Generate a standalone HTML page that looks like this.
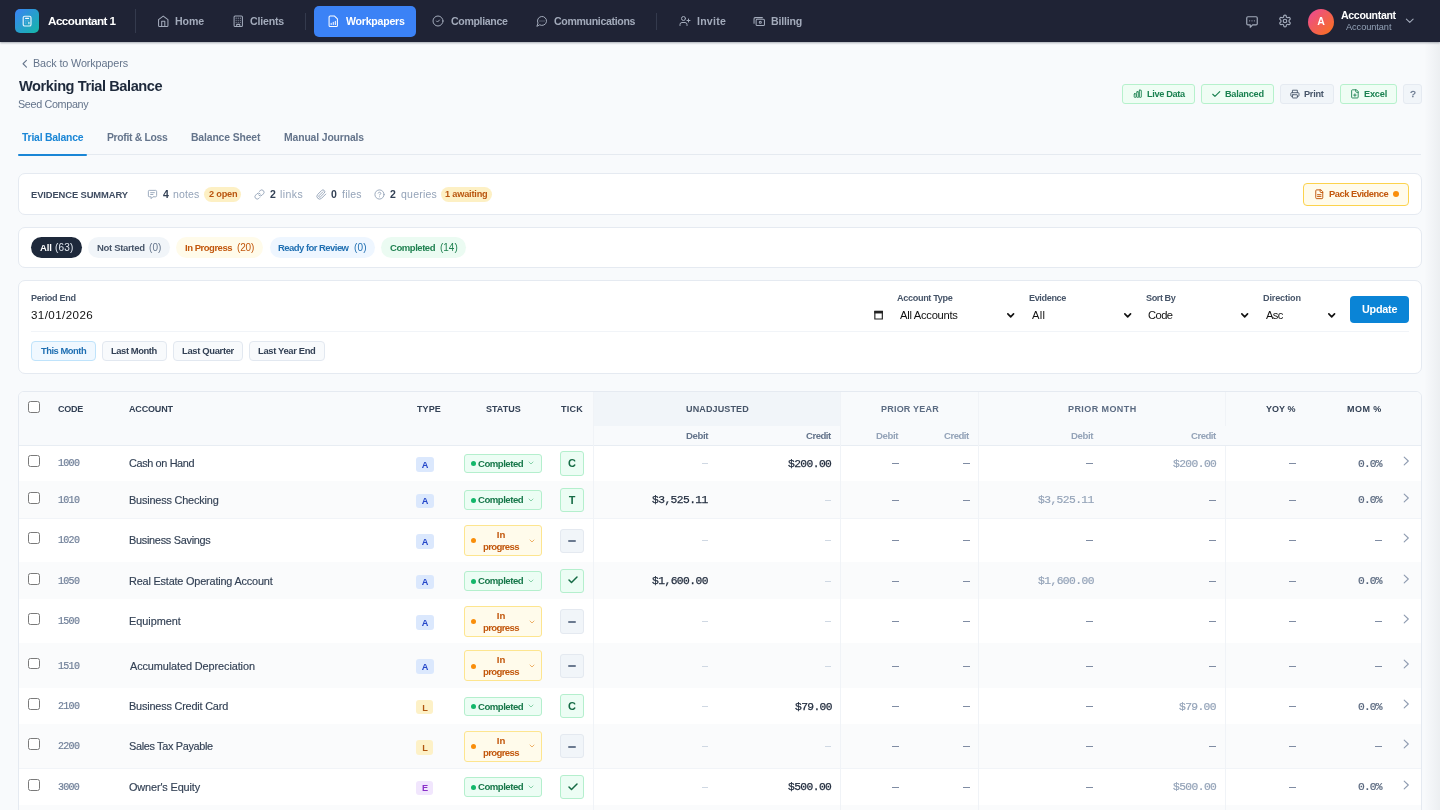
<!DOCTYPE html>
<html><head><meta charset="utf-8"><title>Working Trial Balance</title><style>
*{margin:0;padding:0}
html,body{width:1440px;height:810px;overflow:hidden;background:#f8fafc;font-family:'Liberation Sans',sans-serif}
.b{position:absolute}
.t{position:absolute;white-space:nowrap;will-change:transform}
.i{position:absolute;overflow:visible}
</style></head>
<body>
<div class="b" style="left:0.00px;top:0.00px;width:1440.00px;height:41.50px;background:#1f2335;box-shadow:0 1px 2px rgba(15,23,42,.35)"></div>
<div class="b" style="left:15.00px;top:9.00px;width:24.00px;height:24.00px;background:linear-gradient(135deg,#3b82f6,#14b8a6);border-radius:5px"></div>
<svg class="i" style="left:22px;top:15px;width:10px;height:12px" viewBox="0 0 10 12"><rect x="1.2" y="1.2" width="7.8" height="9.8" rx="1.6" fill="none" stroke="#e6f4fb" stroke-width="1.15"/><path d="M3.6 3.4h3" stroke="#f2fbff" stroke-width="1.1" stroke-linecap="round"/><path d="M3.2 5.9h1.2M5.4 5.9h1.2M3.2 8.1h1.2" stroke="#bfe3f5" stroke-width="0.9" opacity=".6"/><path d="M6.9 7.4v1.4" stroke="#f2fbff" stroke-width="1.1" stroke-linecap="round"/></svg>
<div class="t" id="t0" style="top:15.40px;font:700 11.7px/11.7px 'Liberation Sans',sans-serif;color:#ffffff;letter-spacing:-0.538px;left:48.01px;">Accountant 1</div>
<div class="b" style="left:134.50px;top:9.00px;width:1.00px;height:24.00px;background:#343a4d"></div>
<svg class="i" style="left:156.50px;top:15.20px;width:12.50px;height:12.50px;" viewBox="0 0 24 24" fill="none" stroke="#a3abbb" stroke-width="2" stroke-linecap="round" stroke-linejoin="round"><path d="m3 9 9-7 9 7v11a2 2 0 0 1-2 2H5a2 2 0 0 1-2-2z"/><polyline points="9 22 9 12 15 12 15 22"/></svg>
<div class="t" id="t1" style="top:16.13px;font:700 10.6px/10.6px 'Liberation Sans',sans-serif;color:#a3abbb;letter-spacing:-0.089px;left:174.69px;">Home</div>
<svg class="i" style="left:231.50px;top:15.20px;width:12.50px;height:12.50px;" viewBox="0 0 24 24" fill="none" stroke="#a3abbb" stroke-width="2" stroke-linecap="round" stroke-linejoin="round"><rect x="4" y="2" width="16" height="20" rx="2"/><path d="M9 22v-4h6v4"/><path d="M8 6h.01M16 6h.01M12 6h.01M12 10h.01M12 14h.01M16 10h.01M16 14h.01M8 10h.01M8 14h.01"/></svg>
<div class="t" id="t2" style="top:16.13px;font:700 10.6px/10.6px 'Liberation Sans',sans-serif;color:#a3abbb;letter-spacing:-0.193px;left:249.97px;">Clients</div>
<div class="b" style="left:304.80px;top:12.50px;width:1.00px;height:17.30px;background:#343a4d"></div>
<div class="b" style="left:314.20px;top:6.20px;width:102.00px;height:30.80px;background:#3b82f6;border-radius:5px"></div>
<svg class="i" style="left:327.00px;top:15.20px;width:12.50px;height:12.50px;" viewBox="0 0 24 24" fill="none" stroke="#ffffff" stroke-width="2" stroke-linecap="round" stroke-linejoin="round"><path d="M14.5 2H6a2 2 0 0 0-2 2v16a2 2 0 0 0 2 2h12a2 2 0 0 0 2-2V7.5L14.5 2z"/><path d="M8 18v-2M12 18v-4M16 18v-6"/></svg>
<div class="t" id="t3" style="top:16.13px;font:700 10.6px/10.6px 'Liberation Sans',sans-serif;color:#ffffff;letter-spacing:-0.245px;left:345.79px;">Workpapers</div>
<svg class="i" style="left:432.20px;top:15.40px;width:12.00px;height:12.00px;" viewBox="0 0 24 24" fill="none" stroke="#a3abbb" stroke-width="2" stroke-linecap="round" stroke-linejoin="round"><circle cx="12" cy="12" r="10"/><path d="m9 12 2 2 4-4"/></svg>
<div class="t" id="t4" style="top:16.23px;font:700 10.6px/10.6px 'Liberation Sans',sans-serif;color:#a3abbb;letter-spacing:-0.350px;left:450.57px;">Compliance</div>
<svg class="i" style="left:535.60px;top:15.30px;width:12.00px;height:12.00px;" viewBox="0 0 24 24" fill="none" stroke="#a3abbb" stroke-width="2" stroke-linecap="round" stroke-linejoin="round"><path d="M7.9 20A9 9 0 1 0 4 16.1L2 22Z"/><path d="M8 12h.01M12 12h.01M16 12h.01"/></svg>
<div class="t" id="t5" style="top:16.23px;font:700 10.6px/10.6px 'Liberation Sans',sans-serif;color:#a3abbb;letter-spacing:-0.344px;left:553.67px;">Communications</div>
<div class="b" style="left:656.00px;top:12.50px;width:1.00px;height:17.30px;background:#343a4d"></div>
<svg class="i" style="left:678.50px;top:15.30px;width:12.00px;height:12.00px;" viewBox="0 0 24 24" fill="none" stroke="#a3abbb" stroke-width="2" stroke-linecap="round" stroke-linejoin="round"><path d="M16 21v-2a4 4 0 0 0-4-4H6a4 4 0 0 0-4 4v2"/><circle cx="9" cy="7" r="4"/><path d="M19 8v6M22 11h-6"/></svg>
<div class="t" id="t6" style="top:16.13px;font:700 10.6px/10.6px 'Liberation Sans',sans-serif;color:#a3abbb;letter-spacing:0.230px;left:696.54px;">Invite</div>
<svg class="i" style="left:752.80px;top:15.00px;width:12.50px;height:12.50px;" viewBox="0 0 24 24" fill="none" stroke="#a3abbb" stroke-width="2" stroke-linecap="round" stroke-linejoin="round"><rect x="6" y="8" width="16" height="12" rx="2"/><path d="M2 16V7a2 2 0 0 1 2-2h14"/><circle cx="14" cy="14" r="2"/></svg>
<div class="t" id="t7" style="top:16.13px;font:700 10.6px/10.6px 'Liberation Sans',sans-serif;color:#a3abbb;letter-spacing:-0.193px;left:771.39px;">Billing</div>
<svg class="i" style="left:1244.50px;top:14.50px;width:14.00px;height:14.00px;" viewBox="0 0 24 24" fill="none" stroke="#a3abbb" stroke-width="2" stroke-linecap="round" stroke-linejoin="round"><path d="M21 15a2 2 0 0 1-2 2H13l-4 4v-4H5a2 2 0 0 1-2-2V5a2 2 0 0 1 2-2h14a2 2 0 0 1 2 2z"/><path d="M8 10h.01M12 10h.01M16 10h.01"/></svg>
<svg class="i" style="left:1277.60px;top:14.30px;width:14.00px;height:14.00px;" viewBox="0 0 24 24" fill="none" stroke="#a3abbb" stroke-width="2" stroke-linecap="round" stroke-linejoin="round"><path d="M12.22 2h-.44a2 2 0 0 0-2 2v.18a2 2 0 0 1-1 1.73l-.43.25a2 2 0 0 1-2 0l-.15-.08a2 2 0 0 0-2.73.73l-.22.38a2 2 0 0 0 .73 2.73l.15.1a2 2 0 0 1 1 1.72v.51a2 2 0 0 1-1 1.74l-.15.09a2 2 0 0 0-.73 2.73l.22.38a2 2 0 0 0 2.73.73l.15-.08a2 2 0 0 1 2 0l.43.25a2 2 0 0 1 1 1.73V20a2 2 0 0 0 2 2h.44a2 2 0 0 0 2-2v-.18a2 2 0 0 1 1-1.730l.43-.25a2 2 0 0 1 2 0l.15.08a2 2 0 0 0 2.73-.73l.22-.39a2 2 0 0 0-.73-2.73l-.15-.08a2 2 0 0 1-1-1.74v-.5a2 2 0 0 1 1-1.74l.15-.09a2 2 0 0 0 .73-2.73l-.22-.38a2 2 0 0 0-2.73-.73l-.15.08a2 2 0 0 1-2 0l-.43-.25a2 2 0 0 1-1-1.73V4a2 2 0 0 0-2-2z"/><circle cx="12" cy="12" r="3"/></svg>
<div class="b" style="left:1308.30px;top:8.50px;width:26.00px;height:26.00px;background:linear-gradient(135deg,#ec4899,#f97316);border-radius:50%"></div>
<div class="t" id="t8" style="top:16.21px;font:700 10.5px/10.5px 'Liberation Sans',sans-serif;color:#ffffff;letter-spacing:0.000px;left:1321.30px;transform:translateX(-50%);">A</div>
<div class="t" id="t9" style="top:10.13px;font:700 10.6px/10.6px 'Liberation Sans',sans-serif;color:#ffffff;letter-spacing:-0.352px;left:1341.04px;">Accountant</div>
<div class="t" id="t10" style="top:22.51px;font:400 9.2px/9.2px 'Liberation Sans',sans-serif;color:#94a3b8;letter-spacing:-0.055px;left:1345.98px;">Accountant</div>
<svg class="i" style="left:1402.80px;top:13.60px;width:13.50px;height:13.50px;" viewBox="0 0 24 24" fill="none" stroke="#a3abbb" stroke-width="1.9" stroke-linecap="round" stroke-linejoin="round"><path d="m6 9 6 6 6-6"/></svg>
<svg class="i" style="left:17.60px;top:56.90px;width:13.50px;height:13.50px;" viewBox="0 0 24 24" fill="none" stroke="#64748b" stroke-width="1.9" stroke-linecap="round" stroke-linejoin="round"><path d="m15 18-6-6 6-6"/></svg>
<div class="t" id="t11" style="top:57.76px;font:400 10.8px/10.8px 'Liberation Sans',sans-serif;color:#64748b;letter-spacing:-0.117px;left:32.86px;">Back to Workpapers</div>
<div class="t" id="t12" style="top:78.89px;font:700 14.6px/14.6px 'Liberation Sans',sans-serif;color:#1e293b;letter-spacing:-0.429px;left:18.74px;">Working Trial Balance</div>
<div class="t" id="t13" style="top:98.96px;font:400 10.8px/10.8px 'Liberation Sans',sans-serif;color:#64748b;letter-spacing:-0.348px;left:18.11px;">Seed Company</div>
<div class="b" style="left:1122.20px;top:84.20px;width:72.80px;height:19.60px;background:#effdf4;border:1px solid #b6f1cc;border-radius:3px;box-sizing:border-box"></div>
<svg class="i" style="left:1132.50px;top:89.30px;width:9.50px;height:9.50px;" viewBox="0 0 24 24" fill="none" stroke="#1a8150" stroke-width="2.2" stroke-linecap="round" stroke-linejoin="round"><rect x="3" y="12" width="5" height="9" rx="1"/><rect x="9.5" y="7" width="5" height="14" rx="1"/><rect x="16" y="3" width="5" height="18" rx="1"/></svg>
<div class="t" id="t14" style="top:89.71px;font:700 9.2px/9.2px 'Liberation Sans',sans-serif;color:#1a8150;letter-spacing:-0.338px;left:1146.68px;">Live Data</div>
<div class="b" style="left:1201.30px;top:84.20px;width:72.50px;height:19.60px;background:#effdf4;border:1px solid #b6f1cc;border-radius:3px;box-sizing:border-box"></div>
<svg class="i" style="left:1211.00px;top:88.80px;width:10.50px;height:10.50px;" viewBox="0 0 24 24" fill="none" stroke="#1a8150" stroke-width="2.6" stroke-linecap="round" stroke-linejoin="round"><path d="M20 6 9 17l-5-5"/></svg>
<div class="t" id="t15" style="top:89.71px;font:700 9.2px/9.2px 'Liberation Sans',sans-serif;color:#1a8150;letter-spacing:-0.263px;left:1225.38px;">Balanced</div>
<div class="b" style="left:1280.20px;top:84.20px;width:53.60px;height:19.60px;background:#f1f5f9;border:1px solid #e5eaf1;border-radius:3px;box-sizing:border-box"></div>
<svg class="i" style="left:1289.80px;top:89.20px;width:9.80px;height:9.80px;" viewBox="0 0 24 24" fill="none" stroke="#475569" stroke-width="2.2" stroke-linecap="round" stroke-linejoin="round"><path d="M6 9V3h12v6"/><path d="M6 18H4a2 2 0 0 1-2-2v-5a2 2 0 0 1 2-2h16a2 2 0 0 1 2 2v5a2 2 0 0 1-2 2h-2"/><rect x="6" y="14" width="12" height="8" rx="1"/></svg>
<div class="t" id="t16" style="top:89.71px;font:700 9.2px/9.2px 'Liberation Sans',sans-serif;color:#475569;letter-spacing:-0.277px;left:1304.28px;">Print</div>
<div class="b" style="left:1340.00px;top:84.20px;width:56.70px;height:19.60px;background:#effdf4;border:1px solid #b6f1cc;border-radius:3px;box-sizing:border-box"></div>
<svg class="i" style="left:1350.30px;top:89.20px;width:9.80px;height:9.80px;" viewBox="0 0 24 24" fill="none" stroke="#1a8150" stroke-width="2.2" stroke-linecap="round" stroke-linejoin="round"><path d="M15 2H6a2 2 0 0 0-2 2v16a2 2 0 0 0 2 2h12a2 2 0 0 0 2-2V7Z"/><path d="M14 2v4a2 2 0 0 0 2 2h4"/><path d="M9 15h6M12 12v6"/></svg>
<div class="t" id="t17" style="top:89.71px;font:700 9.2px/9.2px 'Liberation Sans',sans-serif;color:#1a8150;letter-spacing:-0.187px;left:1364.38px;">Excel</div>
<div class="b" style="left:1403.30px;top:84.20px;width:18.50px;height:19.60px;background:#f1f5f9;border:1px solid #e5eaf1;border-radius:3px;box-sizing:border-box"></div>
<div class="t" id="t18" style="top:89.10px;font:400 9.8px/9.8px 'Liberation Sans',sans-serif;color:#64748b;letter-spacing:0.000px;left:1412.60px;transform:translateX(-50%);-webkit-text-stroke:0.3px #64748b;">?</div>
<div class="t" id="t19" style="top:132.80px;font:700 10.4px/10.4px 'Liberation Sans',sans-serif;color:#1a86d6;letter-spacing:-0.211px;left:21.78px;">Trial Balance</div>
<div class="t" id="t20" style="top:132.80px;font:700 10.4px/10.4px 'Liberation Sans',sans-serif;color:#64748b;letter-spacing:-0.329px;left:107.10px;">Profit &amp; Loss</div>
<div class="t" id="t21" style="top:132.80px;font:700 10.4px/10.4px 'Liberation Sans',sans-serif;color:#64748b;letter-spacing:-0.135px;left:191.30px;">Balance Sheet</div>
<div class="t" id="t22" style="top:132.80px;font:700 10.4px/10.4px 'Liberation Sans',sans-serif;color:#64748b;letter-spacing:-0.134px;left:284.30px;">Manual Journals</div>
<div class="b" style="left:18.00px;top:154.30px;width:1403.20px;height:1.20px;background:#e5eaf0"></div>
<div class="b" style="left:18.10px;top:153.60px;width:68.60px;height:2.00px;background:#1a86d6;border-radius:1px"></div>
<div class="b" style="left:17.60px;top:173.00px;width:1404.60px;height:42.10px;background:#ffffff;border:1px solid #e5eaf1;border-radius:7px;box-sizing:border-box"></div>
<div class="t" id="t23" style="top:189.54px;font:700 9.4px/9.4px 'Liberation Sans',sans-serif;color:#3f4c61;letter-spacing:-0.110px;left:30.67px;">EVIDENCE SUMMARY</div>
<svg class="i" style="left:146.50px;top:188.80px;width:11.00px;height:11.00px;" viewBox="0 0 24 24" fill="none" stroke="#94a3b8" stroke-width="2" stroke-linecap="round" stroke-linejoin="round"><path d="M21 15a2 2 0 0 1-2 2H13l-4 4v-4H5a2 2 0 0 1-2-2V5a2 2 0 0 1 2-2h14a2 2 0 0 1 2 2z"/><path d="M8 8h8M8 12h5"/></svg>
<div class="t" id="t24" style="top:188.71px;font:700 10.5px/10.5px 'Liberation Sans',sans-serif;color:#334155;letter-spacing:0.000px;left:162.84px;">4</div>
<div class="t" id="t25" style="top:188.71px;font:400 10.5px/10.5px 'Liberation Sans',sans-serif;color:#94a3b8;letter-spacing:0.147px;left:173.10px;">notes</div>
<div class="b" style="left:204.00px;top:187.00px;width:37.30px;height:14.70px;background:#fdf0c4;border-radius:8px"></div>
<div class="t" id="t26" style="top:189.51px;font:700 9.2px/9.2px 'Liberation Sans',sans-serif;color:#b9560f;letter-spacing:-0.204px;left:208.68px;">2 open</div>
<svg class="i" style="left:254.30px;top:188.60px;width:11.00px;height:11.00px;" viewBox="0 0 24 24" fill="none" stroke="#94a3b8" stroke-width="2" stroke-linecap="round" stroke-linejoin="round"><path d="M10 13a5 5 0 0 0 7.54.54l3-3a5 5 0 0 0-7.07-7.07l-1.72 1.71"/><path d="M14 11a5 5 0 0 0-7.54-.54l-3 3a5 5 0 0 0 7.07 7.07l1.71-1.71"/></svg>
<div class="t" id="t27" style="top:188.71px;font:700 10.5px/10.5px 'Liberation Sans',sans-serif;color:#334155;letter-spacing:0.000px;left:270.04px;">2</div>
<div class="t" id="t28" style="top:188.71px;font:400 10.5px/10.5px 'Liberation Sans',sans-serif;color:#94a3b8;letter-spacing:0.418px;left:280.09px;">links</div>
<svg class="i" style="left:315.50px;top:188.60px;width:11.00px;height:11.00px;" viewBox="0 0 24 24" fill="none" stroke="#94a3b8" stroke-width="2" stroke-linecap="round" stroke-linejoin="round"><path d="m21.44 11.05-9.19 9.19a6 6 0 0 1-8.49-8.49l8.57-8.57A4 4 0 1 1 18 8.84l-8.59 8.57a2 2 0 0 1-2.830-2.83l8.49-8.48"/></svg>
<div class="t" id="t29" style="top:188.71px;font:700 10.5px/10.5px 'Liberation Sans',sans-serif;color:#334155;letter-spacing:0.000px;left:330.58px;">0</div>
<div class="t" id="t30" style="top:188.71px;font:400 10.5px/10.5px 'Liberation Sans',sans-serif;color:#94a3b8;letter-spacing:0.210px;left:341.85px;">files</div>
<svg class="i" style="left:374.20px;top:188.60px;width:11.00px;height:11.00px;" viewBox="0 0 24 24" fill="none" stroke="#94a3b8" stroke-width="2" stroke-linecap="round" stroke-linejoin="round"><circle cx="12" cy="12" r="10"/><path d="M9.09 9a3 3 0 0 1 5.83 1c0 2-3 3-3 3"/><path d="M12 17h.01"/></svg>
<div class="t" id="t31" style="top:188.71px;font:700 10.5px/10.5px 'Liberation Sans',sans-serif;color:#334155;letter-spacing:0.000px;left:389.64px;">2</div>
<div class="t" id="t32" style="top:188.71px;font:400 10.5px/10.5px 'Liberation Sans',sans-serif;color:#94a3b8;letter-spacing:0.228px;left:400.56px;">queries</div>
<div class="b" style="left:440.50px;top:187.00px;width:51.50px;height:14.70px;background:#fdf0c4;border-radius:8px"></div>
<div class="t" id="t33" style="top:189.51px;font:700 9.2px/9.2px 'Liberation Sans',sans-serif;color:#b9560f;letter-spacing:-0.192px;left:444.92px;">1 awaiting</div>
<div class="b" style="left:1303.10px;top:183.10px;width:105.70px;height:22.60px;background:#fffbeb;border:1px solid #fcd34d;border-radius:4px;box-sizing:border-box"></div>
<svg class="i" style="left:1313.50px;top:189.00px;width:10.50px;height:10.50px;" viewBox="0 0 24 24" fill="none" stroke="#c2570c" stroke-width="2.2" stroke-linecap="round" stroke-linejoin="round"><path d="M15 2H6a2 2 0 0 0-2 2v16a2 2 0 0 0 2 2h12a2 2 0 0 0 2-2V7Z"/><path d="M14 2v4a2 2 0 0 0 2 2h4"/><path d="M16 13H8M16 17H8"/></svg>
<div class="t" id="t34" style="top:190.03px;font:700 9.3px/9.3px 'Liberation Sans',sans-serif;color:#c2570c;letter-spacing:-0.457px;left:1328.98px;">Pack Evidence</div>
<div class="b" style="left:1393.00px;top:191.00px;width:6.30px;height:6.30px;background:#f98e0a;border-radius:50%"></div>
<div class="b" style="left:17.60px;top:227.20px;width:1404.60px;height:40.50px;background:#ffffff;border:1px solid #e5eaf1;border-radius:7px;box-sizing:border-box"></div>
<div class="b" style="left:31.00px;top:237.20px;width:51.00px;height:20.80px;background:#1e293b;border-radius:11px"></div>
<div class="t" id="t35" style="top:242.96px;font:700 9.5px/9.5px 'Liberation Sans',sans-serif;color:#ffffff;letter-spacing:-0.116px;left:39.76px;">All</div>
<div class="t" id="t36" style="top:242.53px;font:400 10px/10px 'Liberation Sans',sans-serif;color:#e2e8f0;letter-spacing:0.148px;left:55.38px;">(63)</div>
<div class="b" style="left:88.00px;top:237.20px;width:81.70px;height:20.80px;background:#f1f5f9;border-radius:11px"></div>
<div class="t" id="t37" style="top:242.96px;font:700 9.5px/9.5px 'Liberation Sans',sans-serif;color:#475569;letter-spacing:-0.324px;left:96.66px;">Not Started</div>
<div class="t" id="t38" style="top:242.53px;font:400 10px/10px 'Liberation Sans',sans-serif;color:#64748b;letter-spacing:0.053px;left:149.28px;">(0)</div>
<div class="b" style="left:176.00px;top:237.20px;width:87.00px;height:20.80px;background:#fffbea;border-radius:11px"></div>
<div class="t" id="t39" style="top:242.96px;font:700 9.5px/9.5px 'Liberation Sans',sans-serif;color:#c2570c;letter-spacing:-0.476px;left:184.86px;">In Progress</div>
<div class="t" id="t40" style="top:242.53px;font:400 10px/10px 'Liberation Sans',sans-serif;color:#c2570c;letter-spacing:-0.186px;left:237.38px;">(20)</div>
<div class="b" style="left:269.50px;top:237.20px;width:105.50px;height:20.80px;background:#eef6ff;border-radius:11px"></div>
<div class="t" id="t41" style="top:242.96px;font:700 9.5px/9.5px 'Liberation Sans',sans-serif;color:#1f6fb2;letter-spacing:-0.546px;left:277.96px;">Ready for Review</div>
<div class="t" id="t42" style="top:242.53px;font:400 10px/10px 'Liberation Sans',sans-serif;color:#1f6fb2;letter-spacing:0.203px;left:353.98px;">(0)</div>
<div class="b" style="left:381.00px;top:237.20px;width:84.70px;height:20.80px;background:#ebfbf2;border-radius:11px"></div>
<div class="t" id="t43" style="top:242.96px;font:700 9.5px/9.5px 'Liberation Sans',sans-serif;color:#1f8150;letter-spacing:-0.447px;left:389.61px;">Completed</div>
<div class="t" id="t44" style="top:242.53px;font:400 10px/10px 'Liberation Sans',sans-serif;color:#1f8150;letter-spacing:-0.019px;left:439.88px;">(14)</div>
<div class="b" style="left:17.60px;top:279.50px;width:1404.60px;height:94.30px;background:#ffffff;border:1px solid #e5eaf1;border-radius:7px;box-sizing:border-box"></div>
<div class="t" id="t45" style="top:294.20px;font:700 9.1px/9.1px 'Liberation Sans',sans-serif;color:#475569;letter-spacing:-0.338px;left:30.89px;">Period End</div>
<div class="t" id="t46" style="top:309.18px;font:400 11.6px/11.6px 'Liberation Sans',sans-serif;color:#111111;letter-spacing:0.413px;left:31.46px;">31/01/2026</div>
<svg class="i" style="left:873.8px;top:310.2px;width:9.2px;height:9.6px" viewBox="0 0 9 10"><path d="M0.6 1.4h7.8v8h-7.8z" fill="none" stroke="#222" stroke-width="1.2"/><rect x="0" y="1" width="9" height="2.6" fill="#222"/></svg>
<div class="t" id="t47" style="top:294.30px;font:700 9.1px/9.1px 'Liberation Sans',sans-serif;color:#475569;letter-spacing:-0.329px;left:897.27px;">Account Type</div>
<div class="t" id="t48" style="top:309.52px;font:400 11.2px/11.2px 'Liberation Sans',sans-serif;color:#111111;letter-spacing:-0.275px;left:900.48px;">All Accounts</div>
<svg class="i" style="left:1007.20px;top:312.6px;width:7.4px;height:5.2px" viewBox="0 0 8 5.4"><path d="M0.9 0.9 4 4 7.1 0.9" fill="none" stroke="#111" stroke-width="1.8" stroke-linecap="round" stroke-linejoin="round"/></svg>
<div class="t" id="t49" style="top:294.30px;font:700 9.1px/9.1px 'Liberation Sans',sans-serif;color:#475569;letter-spacing:-0.374px;left:1029.19px;">Evidence</div>
<div class="t" id="t50" style="top:309.52px;font:400 11.2px/11.2px 'Liberation Sans',sans-serif;color:#111111;letter-spacing:0.267px;left:1032.18px;">All</div>
<svg class="i" style="left:1124.00px;top:312.6px;width:7.4px;height:5.2px" viewBox="0 0 8 5.4"><path d="M0.9 0.9 4 4 7.1 0.9" fill="none" stroke="#111" stroke-width="1.8" stroke-linecap="round" stroke-linejoin="round"/></svg>
<div class="t" id="t51" style="top:294.30px;font:700 9.1px/9.1px 'Liberation Sans',sans-serif;color:#475569;letter-spacing:-0.422px;left:1145.99px;">Sort By</div>
<div class="t" id="t52" style="top:309.52px;font:400 11.2px/11.2px 'Liberation Sans',sans-serif;color:#111111;letter-spacing:-0.561px;left:1148.43px;">Code</div>
<svg class="i" style="left:1241.00px;top:312.6px;width:7.4px;height:5.2px" viewBox="0 0 8 5.4"><path d="M0.9 0.9 4 4 7.1 0.9" fill="none" stroke="#111" stroke-width="1.8" stroke-linecap="round" stroke-linejoin="round"/></svg>
<div class="t" id="t53" style="top:294.30px;font:700 9.1px/9.1px 'Liberation Sans',sans-serif;color:#475569;letter-spacing:-0.169px;left:1262.69px;">Direction</div>
<div class="t" id="t54" style="top:309.52px;font:400 11.2px/11.2px 'Liberation Sans',sans-serif;color:#111111;letter-spacing:-0.670px;left:1265.98px;">Asc</div>
<svg class="i" style="left:1327.80px;top:312.6px;width:7.4px;height:5.2px" viewBox="0 0 8 5.4"><path d="M0.9 0.9 4 4 7.1 0.9" fill="none" stroke="#111" stroke-width="1.8" stroke-linecap="round" stroke-linejoin="round"/></svg>
<div class="b" style="left:1349.80px;top:295.50px;width:58.95px;height:27.50px;background:#0a84d6;border-radius:4px"></div>
<div class="t" id="t55" style="top:303.96px;font:700 10.8px/10.8px 'Liberation Sans',sans-serif;color:#ffffff;letter-spacing:-0.235px;left:1361.65px;">Update</div>
<div class="b" style="left:31.00px;top:331.00px;width:1377.75px;height:1.00px;background:#f1f4f8"></div>
<div class="b" style="left:31.25px;top:341.25px;width:64.65px;height:19.35px;background:#f0f8ff;border:1px solid #bfe3fb;border-radius:4px;box-sizing:border-box"></div>
<div class="t" id="t56" style="top:346.04px;font:700 9.4px/9.4px 'Liberation Sans',sans-serif;color:#1f6fb2;letter-spacing:-0.479px;left:40.89px;">This Month</div>
<div class="b" style="left:102.25px;top:341.25px;width:64.25px;height:19.35px;background:#f8fafc;border:1px solid #e2e8f0;border-radius:4px;box-sizing:border-box"></div>
<div class="t" id="t57" style="top:346.04px;font:700 9.4px/9.4px 'Liberation Sans',sans-serif;color:#334155;letter-spacing:-0.410px;left:111.27px;">Last Month</div>
<div class="b" style="left:172.80px;top:341.25px;width:70.40px;height:19.35px;background:#f8fafc;border:1px solid #e2e8f0;border-radius:4px;box-sizing:border-box"></div>
<div class="t" id="t58" style="top:346.04px;font:700 9.4px/9.4px 'Liberation Sans',sans-serif;color:#334155;letter-spacing:-0.316px;left:181.87px;">Last Quarter</div>
<div class="b" style="left:249.30px;top:341.25px;width:75.30px;height:19.35px;background:#f8fafc;border:1px solid #e2e8f0;border-radius:4px;box-sizing:border-box"></div>
<div class="t" id="t59" style="top:346.04px;font:700 9.4px/9.4px 'Liberation Sans',sans-serif;color:#334155;letter-spacing:-0.341px;left:258.17px;">Last Year End</div>
<div class="b" style="left:17.50px;top:391.30px;width:1404.70px;height:438.70px;background:#ffffff;border:1px solid #e5eaf1;border-radius:6px;box-sizing:border-box;overflow:hidden"></div>
<div class="b" style="left:18.50px;top:392.30px;width:1402.70px;height:52.50px;background:#f8fafc;border-radius:5px 5px 0 0"></div>
<div class="b" style="left:593.80px;top:392.30px;width:247.00px;height:34.20px;background:#f1f5f9"></div>
<div class="b" style="left:18.50px;top:444.50px;width:1402.70px;height:1.00px;background:#e8edf3"></div>
<div class="b" style="left:592.80px;top:392.30px;width:1.00px;height:417.70px;background:#f0f3f7"></div>
<div class="b" style="left:840.30px;top:392.30px;width:1.00px;height:417.70px;background:#f0f3f7"></div>
<div class="b" style="left:978.30px;top:392.30px;width:1.00px;height:417.70px;background:#f0f3f7"></div>
<div class="b" style="left:1225.10px;top:392.30px;width:1.00px;height:34.20px;background:#f0f3f7"></div>
<div class="b" style="left:1225.10px;top:445.50px;width:1.00px;height:364.50px;background:#f0f3f7"></div>
<div class="b" style="left:28.20px;top:401.30px;width:11.80px;height:11.80px;background:#fff;border:1px solid #7a7a7a;border-radius:2.5px;box-sizing:border-box"></div>
<div class="t" id="t60" style="top:405.28px;font:700 9.0px/9.0px 'Liberation Sans',sans-serif;color:#334155;letter-spacing:-0.265px;left:57.93px;">CODE</div>
<div class="t" id="t61" style="top:405.28px;font:700 9.0px/9.0px 'Liberation Sans',sans-serif;color:#334155;letter-spacing:-0.163px;left:129.38px;">ACCOUNT</div>
<div class="t" id="t62" style="top:405.28px;font:700 9.0px/9.0px 'Liberation Sans',sans-serif;color:#334155;letter-spacing:0.079px;left:416.60px;">TYPE</div>
<div class="t" id="t63" style="top:405.28px;font:700 9.0px/9.0px 'Liberation Sans',sans-serif;color:#334155;letter-spacing:0.008px;left:485.74px;">STATUS</div>
<div class="t" id="t64" style="top:405.28px;font:700 9.0px/9.0px 'Liberation Sans',sans-serif;color:#334155;letter-spacing:0.262px;left:561.30px;">TICK</div>
<div class="t" id="t65" style="top:405.28px;font:700 9.0px/9.0px 'Liberation Sans',sans-serif;color:#475569;letter-spacing:0.134px;left:685.66px;">UNADJUSTED</div>
<div class="t" id="t66" style="top:405.28px;font:700 9.0px/9.0px 'Liberation Sans',sans-serif;color:#5b6b82;letter-spacing:0.214px;left:880.50px;">PRIOR YEAR</div>
<div class="t" id="t67" style="top:405.28px;font:700 9.0px/9.0px 'Liberation Sans',sans-serif;color:#5b6b82;letter-spacing:0.421px;left:1068.40px;">PRIOR MONTH</div>
<div class="t" id="t68" style="top:405.28px;font:700 9.0px/9.0px 'Liberation Sans',sans-serif;color:#334155;letter-spacing:0.008px;left:1266.35px;">YOY %</div>
<div class="t" id="t69" style="top:405.28px;font:700 9.0px/9.0px 'Liberation Sans',sans-serif;color:#334155;letter-spacing:0.460px;left:1347.40px;">MOM %</div>
<div class="t" id="t70" style="top:430.97px;font:700 9.6px/9.6px 'Liberation Sans',sans-serif;color:#64748b;letter-spacing:-0.406px;right:732.09px;">Debit</div>
<div class="t" id="t71" style="top:430.97px;font:700 9.6px/9.6px 'Liberation Sans',sans-serif;color:#64748b;letter-spacing:-0.502px;right:609.28px;">Credit</div>
<div class="t" id="t72" style="top:430.97px;font:700 9.6px/9.6px 'Liberation Sans',sans-serif;color:#94a3b8;letter-spacing:-0.356px;right:542.04px;">Debit</div>
<div class="t" id="t73" style="top:430.97px;font:700 9.6px/9.6px 'Liberation Sans',sans-serif;color:#94a3b8;letter-spacing:-0.502px;right:471.18px;">Credit</div>
<div class="t" id="t74" style="top:430.97px;font:700 9.6px/9.6px 'Liberation Sans',sans-serif;color:#94a3b8;letter-spacing:-0.356px;right:347.04px;">Debit</div>
<div class="t" id="t75" style="top:430.97px;font:700 9.6px/9.6px 'Liberation Sans',sans-serif;color:#94a3b8;letter-spacing:-0.502px;right:224.18px;">Credit</div>
<div class="b" style="left:18.50px;top:445.50px;width:1402.70px;height:35.70px;background:#ffffff"></div>
<div class="b" style="left:18.50px;top:480.70px;width:1402.70px;height:1.00px;background:#f1f4f8"></div>
<div class="b" style="left:592.80px;top:445.50px;width:1.00px;height:35.70px;background:#f0f3f7"></div>
<div class="b" style="left:840.30px;top:445.50px;width:1.00px;height:35.70px;background:#f0f3f7"></div>
<div class="b" style="left:978.30px;top:445.50px;width:1.00px;height:35.70px;background:#f0f3f7"></div>
<div class="b" style="left:1225.10px;top:445.50px;width:1.00px;height:35.70px;background:#f0f3f7"></div>
<div class="b" style="left:28.20px;top:455.35px;width:11.80px;height:11.80px;background:#fff;border:1px solid #7a7a7a;border-radius:2.5px;box-sizing:border-box"></div>
<div class="t" id="code0" style="top:459.39px;font:400 10px/10px 'Liberation Mono',monospace;color:#6f7f98;letter-spacing:-0.693px;left:57.88px;-webkit-text-stroke:0.2px #6f7f98;">1000</div>
<div class="t" id="name0" style="top:458.32px;font:400 10.9px/10.9px 'Liberation Sans',sans-serif;color:#334155;letter-spacing:-0.370px;left:129.05px;-webkit-text-stroke:0.15px #334155;">Cash on Hand</div>
<div class="b" style="left:416.40px;top:457.15px;width:17.80px;height:14.70px;background:#dbe8fd;border-radius:3px"></div>
<div class="t" id="typ0" style="top:460.86px;font:700 9.2px/9.2px 'Liberation Sans',sans-serif;color:#2446c9;letter-spacing:0.000px;left:425.30px;transform:translateX(-50%);">A</div>
<div class="b" style="left:464.20px;top:453.85px;width:78.00px;height:19.30px;background:#ecfdf4;border:1px solid #b4efcd;border-radius:3px;box-sizing:border-box"></div>
<div class="b" style="left:471.00px;top:460.50px;width:5.00px;height:5.00px;background:#12b76a;border-radius:50%"></div>
<div class="t" id="comp0" style="top:458.92px;font:700 9.6px/9.6px 'Liberation Sans',sans-serif;color:#17784a;letter-spacing:-0.494px;left:478.31px;">Completed</div>
<svg class="i" style="left:527.20px;top:459.15px;width:8.00px;height:8.00px;" viewBox="0 0 24 24" fill="none" stroke="#7fcea3" stroke-width="2.8" stroke-linecap="round" stroke-linejoin="round"><path d="m6 9 6 6 6-6"/></svg>
<div class="b" style="left:560.20px;top:451.45px;width:24.10px;height:24.10px;background:#ecfdf4;border:1px solid #b4efcd;border-radius:3px;box-sizing:border-box"></div>
<div class="t" id="tick0" style="top:458.34px;font:700 11px/11px 'Liberation Sans',sans-serif;color:#166b45;letter-spacing:0.000px;left:572.25px;transform:translateX(-50%);">C</div>
<div class="b" style="left:702.00px;top:463.00px;width:6.00px;height:1.00px;background:#cfd8e3"></div>
<div class="t" id="v0_1" style="top:458.89px;font:400 11.3px/11.3px 'Liberation Mono',monospace;color:#1e293b;letter-spacing:-0.602px;right:608.51px;-webkit-text-stroke:0.25px #1e293b;">$200.00</div>
<div class="b" style="left:892.00px;top:463.00px;width:7.00px;height:1.00px;background:#7f8ca3"></div>
<div class="b" style="left:963.00px;top:463.00px;width:7.00px;height:1.00px;background:#7f8ca3"></div>
<div class="b" style="left:1086.00px;top:463.00px;width:7.00px;height:1.00px;background:#7f8ca3"></div>
<div class="t" id="v0_5" style="top:458.89px;font:400 11.3px/11.3px 'Liberation Mono',monospace;color:#94a3b8;letter-spacing:-0.602px;right:223.71px;-webkit-text-stroke:0.2px #94a3b8;">$200.00</div>
<div class="b" style="left:1289.00px;top:463.00px;width:7.00px;height:1.00px;background:#7f8ca3"></div>
<div class="t" id="v0_7" style="top:458.89px;font:400 11.3px/11.3px 'Liberation Mono',monospace;color:#56657c;letter-spacing:-0.849px;right:58.65px;-webkit-text-stroke:0.2px #56657c;">0.0%</div>
<svg class="i" style="left:1402px;top:455.35px;width:8px;height:12px" viewBox="0 0 8 12"><path d="M2.2 2.2 6.3 6 2.2 9.8" fill="none" stroke="#8e9bb0" stroke-width="1.1" stroke-linecap="round" stroke-linejoin="round"/></svg>
<div class="b" style="left:18.50px;top:481.20px;width:1402.70px;height:37.40px;background:#fafbfc"></div>
<div class="b" style="left:18.50px;top:518.10px;width:1402.70px;height:1.00px;background:#f1f4f8"></div>
<div class="b" style="left:592.80px;top:481.20px;width:1.00px;height:37.40px;background:#f0f3f7"></div>
<div class="b" style="left:840.30px;top:481.20px;width:1.00px;height:37.40px;background:#f0f3f7"></div>
<div class="b" style="left:978.30px;top:481.20px;width:1.00px;height:37.40px;background:#f0f3f7"></div>
<div class="b" style="left:1225.10px;top:481.20px;width:1.00px;height:37.40px;background:#f0f3f7"></div>
<div class="b" style="left:28.20px;top:491.90px;width:11.80px;height:11.80px;background:#fff;border:1px solid #7a7a7a;border-radius:2.5px;box-sizing:border-box"></div>
<div class="t" id="code1" style="top:495.94px;font:400 10px/10px 'Liberation Mono',monospace;color:#6f7f98;letter-spacing:-0.693px;left:57.88px;-webkit-text-stroke:0.2px #6f7f98;">1010</div>
<div class="t" id="name1" style="top:494.87px;font:400 10.9px/10.9px 'Liberation Sans',sans-serif;color:#334155;letter-spacing:-0.183px;left:128.71px;-webkit-text-stroke:0.15px #334155;">Business Checking</div>
<div class="b" style="left:416.40px;top:493.70px;width:17.80px;height:14.70px;background:#dbe8fd;border-radius:3px"></div>
<div class="t" id="typ1" style="top:497.41px;font:700 9.2px/9.2px 'Liberation Sans',sans-serif;color:#2446c9;letter-spacing:0.000px;left:425.30px;transform:translateX(-50%);">A</div>
<div class="b" style="left:464.20px;top:490.40px;width:78.00px;height:19.30px;background:#ecfdf4;border:1px solid #b4efcd;border-radius:3px;box-sizing:border-box"></div>
<div class="b" style="left:471.00px;top:497.50px;width:5.00px;height:5.00px;background:#12b76a;border-radius:50%"></div>
<div class="t" id="comp1" style="top:495.47px;font:700 9.6px/9.6px 'Liberation Sans',sans-serif;color:#17784a;letter-spacing:-0.494px;left:478.31px;">Completed</div>
<svg class="i" style="left:527.20px;top:495.70px;width:8.00px;height:8.00px;" viewBox="0 0 24 24" fill="none" stroke="#7fcea3" stroke-width="2.8" stroke-linecap="round" stroke-linejoin="round"><path d="m6 9 6 6 6-6"/></svg>
<div class="b" style="left:560.20px;top:488.00px;width:24.10px;height:24.10px;background:#ecfdf4;border:1px solid #b4efcd;border-radius:3px;box-sizing:border-box"></div>
<div class="t" id="tick1" style="top:494.89px;font:700 11px/11px 'Liberation Sans',sans-serif;color:#166b45;letter-spacing:0.000px;left:572.25px;transform:translateX(-50%);">T</div>
<div class="t" id="v1_0" style="top:495.44px;font:400 11.3px/11.3px 'Liberation Mono',monospace;color:#1e293b;letter-spacing:-0.588px;right:731.84px;-webkit-text-stroke:0.25px #1e293b;">$3,525.11</div>
<div class="b" style="left:825.00px;top:500.00px;width:6.00px;height:1.00px;background:#cfd8e3"></div>
<div class="b" style="left:892.00px;top:500.00px;width:7.00px;height:1.00px;background:#7f8ca3"></div>
<div class="b" style="left:963.00px;top:500.00px;width:7.00px;height:1.00px;background:#7f8ca3"></div>
<div class="t" id="v1_4" style="top:495.44px;font:400 11.3px/11.3px 'Liberation Mono',monospace;color:#94a3b8;letter-spacing:-0.588px;right:346.64px;-webkit-text-stroke:0.2px #94a3b8;">$3,525.11</div>
<div class="b" style="left:1209.00px;top:500.00px;width:7.00px;height:1.00px;background:#7f8ca3"></div>
<div class="b" style="left:1289.00px;top:500.00px;width:7.00px;height:1.00px;background:#7f8ca3"></div>
<div class="t" id="v1_7" style="top:495.44px;font:400 11.3px/11.3px 'Liberation Mono',monospace;color:#56657c;letter-spacing:-0.849px;right:58.65px;-webkit-text-stroke:0.2px #56657c;">0.0%</div>
<svg class="i" style="left:1402px;top:491.90px;width:8px;height:12px" viewBox="0 0 8 12"><path d="M2.2 2.2 6.3 6 2.2 9.8" fill="none" stroke="#8e9bb0" stroke-width="1.1" stroke-linecap="round" stroke-linejoin="round"/></svg>
<div class="b" style="left:18.50px;top:518.60px;width:1402.70px;height:43.60px;background:#ffffff"></div>
<div class="b" style="left:18.50px;top:561.70px;width:1402.70px;height:1.00px;background:#f1f4f8"></div>
<div class="b" style="left:592.80px;top:518.60px;width:1.00px;height:43.60px;background:#f0f3f7"></div>
<div class="b" style="left:840.30px;top:518.60px;width:1.00px;height:43.60px;background:#f0f3f7"></div>
<div class="b" style="left:978.30px;top:518.60px;width:1.00px;height:43.60px;background:#f0f3f7"></div>
<div class="b" style="left:1225.10px;top:518.60px;width:1.00px;height:43.60px;background:#f0f3f7"></div>
<div class="b" style="left:28.20px;top:532.40px;width:11.80px;height:11.80px;background:#fff;border:1px solid #7a7a7a;border-radius:2.5px;box-sizing:border-box"></div>
<div class="t" id="code2" style="top:536.44px;font:400 10px/10px 'Liberation Mono',monospace;color:#6f7f98;letter-spacing:-0.693px;left:57.88px;-webkit-text-stroke:0.2px #6f7f98;">1020</div>
<div class="t" id="name2" style="top:535.37px;font:400 10.9px/10.9px 'Liberation Sans',sans-serif;color:#334155;letter-spacing:-0.279px;left:128.71px;-webkit-text-stroke:0.15px #334155;">Business Savings</div>
<div class="b" style="left:416.40px;top:534.20px;width:17.80px;height:14.70px;background:#dbe8fd;border-radius:3px"></div>
<div class="t" id="typ2" style="top:537.91px;font:700 9.2px/9.2px 'Liberation Sans',sans-serif;color:#2446c9;letter-spacing:0.000px;left:425.30px;transform:translateX(-50%);">A</div>
<div class="b" style="left:464.20px;top:525.00px;width:78.00px;height:30.90px;background:#fffbeb;border:1px solid #fde58f;border-radius:3px;box-sizing:border-box"></div>
<div class="b" style="left:471.00px;top:538.00px;width:5.00px;height:5.00px;background:#f98e0a;border-radius:50%"></div>
<div class="t" id="in2" style="top:529.87px;font:700 9.6px/9.6px 'Liberation Sans',sans-serif;color:#c2570c;letter-spacing:0.000px;left:501.20px;transform:translateX(-50%);">In</div>
<div class="t" id="prog2" style="top:541.87px;font:700 9.6px/9.6px 'Liberation Sans',sans-serif;color:#c2570c;letter-spacing:-0.648px;left:501.20px;transform:translateX(-50%);">progress</div>
<svg class="i" style="left:527.80px;top:536.60px;width:8.00px;height:8.00px;" viewBox="0 0 24 24" fill="none" stroke="#ecab5f" stroke-width="2.8" stroke-linecap="round" stroke-linejoin="round"><path d="m6 9 6 6 6-6"/></svg>
<div class="b" style="left:560.20px;top:528.50px;width:24.10px;height:24.10px;background:#f1f5f9;border:1px solid #e4e9f0;border-radius:3px;box-sizing:border-box"></div>
<div class="b" style="left:568.40px;top:540.20px;width:7.80px;height:1.80px;background:#6b7a90;border-radius:1px"></div>
<div class="b" style="left:702.00px;top:540.00px;width:6.00px;height:1.00px;background:#cfd8e3"></div>
<div class="b" style="left:825.00px;top:540.00px;width:6.00px;height:1.00px;background:#cfd8e3"></div>
<div class="b" style="left:892.00px;top:540.00px;width:7.00px;height:1.00px;background:#7f8ca3"></div>
<div class="b" style="left:963.00px;top:540.00px;width:7.00px;height:1.00px;background:#7f8ca3"></div>
<div class="b" style="left:1086.00px;top:540.00px;width:7.00px;height:1.00px;background:#7f8ca3"></div>
<div class="b" style="left:1209.00px;top:540.00px;width:7.00px;height:1.00px;background:#7f8ca3"></div>
<div class="b" style="left:1289.00px;top:540.00px;width:7.00px;height:1.00px;background:#7f8ca3"></div>
<div class="b" style="left:1375.00px;top:540.00px;width:7.00px;height:1.00px;background:#7f8ca3"></div>
<svg class="i" style="left:1402px;top:532.40px;width:8px;height:12px" viewBox="0 0 8 12"><path d="M2.2 2.2 6.3 6 2.2 9.8" fill="none" stroke="#8e9bb0" stroke-width="1.1" stroke-linecap="round" stroke-linejoin="round"/></svg>
<div class="b" style="left:18.50px;top:562.20px;width:1402.70px;height:37.20px;background:#fafbfc"></div>
<div class="b" style="left:18.50px;top:598.90px;width:1402.70px;height:1.00px;background:#f1f4f8"></div>
<div class="b" style="left:592.80px;top:562.20px;width:1.00px;height:37.20px;background:#f0f3f7"></div>
<div class="b" style="left:840.30px;top:562.20px;width:1.00px;height:37.20px;background:#f0f3f7"></div>
<div class="b" style="left:978.30px;top:562.20px;width:1.00px;height:37.20px;background:#f0f3f7"></div>
<div class="b" style="left:1225.10px;top:562.20px;width:1.00px;height:37.20px;background:#f0f3f7"></div>
<div class="b" style="left:28.20px;top:572.80px;width:11.80px;height:11.80px;background:#fff;border:1px solid #7a7a7a;border-radius:2.5px;box-sizing:border-box"></div>
<div class="t" id="code3" style="top:576.84px;font:400 10px/10px 'Liberation Mono',monospace;color:#6f7f98;letter-spacing:-0.693px;left:57.88px;-webkit-text-stroke:0.2px #6f7f98;">1050</div>
<div class="t" id="name3" style="top:575.77px;font:400 10.9px/10.9px 'Liberation Sans',sans-serif;color:#334155;letter-spacing:-0.188px;left:128.71px;-webkit-text-stroke:0.15px #334155;">Real Estate Operating Account</div>
<div class="b" style="left:416.40px;top:574.60px;width:17.80px;height:14.70px;background:#dbe8fd;border-radius:3px"></div>
<div class="t" id="typ3" style="top:578.31px;font:700 9.2px/9.2px 'Liberation Sans',sans-serif;color:#2446c9;letter-spacing:0.000px;left:425.30px;transform:translateX(-50%);">A</div>
<div class="b" style="left:464.20px;top:571.30px;width:78.00px;height:19.30px;background:#ecfdf4;border:1px solid #b4efcd;border-radius:3px;box-sizing:border-box"></div>
<div class="b" style="left:471.00px;top:578.50px;width:5.00px;height:5.00px;background:#12b76a;border-radius:50%"></div>
<div class="t" id="comp3" style="top:576.37px;font:700 9.6px/9.6px 'Liberation Sans',sans-serif;color:#17784a;letter-spacing:-0.494px;left:478.31px;">Completed</div>
<svg class="i" style="left:527.20px;top:576.60px;width:8.00px;height:8.00px;" viewBox="0 0 24 24" fill="none" stroke="#7fcea3" stroke-width="2.8" stroke-linecap="round" stroke-linejoin="round"><path d="m6 9 6 6 6-6"/></svg>
<div class="b" style="left:560.20px;top:568.90px;width:24.10px;height:24.10px;background:#ecfdf4;border:1px solid #b4efcd;border-radius:3px;box-sizing:border-box"></div>
<svg class="i" style="left:566.70px;top:574.40px;width:12.00px;height:12.00px;" viewBox="0 0 24 24" fill="none" stroke="#166b45" stroke-width="3" stroke-linecap="round" stroke-linejoin="round"><path d="M20 6 9 17l-5-5"/></svg>
<div class="t" id="v3_0" style="top:576.34px;font:400 11.3px/11.3px 'Liberation Mono',monospace;color:#1e293b;letter-spacing:-0.570px;right:731.67px;-webkit-text-stroke:0.25px #1e293b;">$1,600.00</div>
<div class="b" style="left:825.00px;top:581.00px;width:6.00px;height:1.00px;background:#cfd8e3"></div>
<div class="b" style="left:892.00px;top:581.00px;width:7.00px;height:1.00px;background:#7f8ca3"></div>
<div class="b" style="left:963.00px;top:581.00px;width:7.00px;height:1.00px;background:#7f8ca3"></div>
<div class="t" id="v3_4" style="top:576.34px;font:400 11.3px/11.3px 'Liberation Mono',monospace;color:#94a3b8;letter-spacing:-0.570px;right:346.47px;-webkit-text-stroke:0.2px #94a3b8;">$1,600.00</div>
<div class="b" style="left:1209.00px;top:581.00px;width:7.00px;height:1.00px;background:#7f8ca3"></div>
<div class="b" style="left:1289.00px;top:581.00px;width:7.00px;height:1.00px;background:#7f8ca3"></div>
<div class="t" id="v3_7" style="top:576.34px;font:400 11.3px/11.3px 'Liberation Mono',monospace;color:#56657c;letter-spacing:-0.849px;right:58.65px;-webkit-text-stroke:0.2px #56657c;">0.0%</div>
<svg class="i" style="left:1402px;top:572.80px;width:8px;height:12px" viewBox="0 0 8 12"><path d="M2.2 2.2 6.3 6 2.2 9.8" fill="none" stroke="#8e9bb0" stroke-width="1.1" stroke-linecap="round" stroke-linejoin="round"/></svg>
<div class="b" style="left:18.50px;top:599.40px;width:1402.70px;height:43.90px;background:#ffffff"></div>
<div class="b" style="left:18.50px;top:642.80px;width:1402.70px;height:1.00px;background:#f1f4f8"></div>
<div class="b" style="left:592.80px;top:599.40px;width:1.00px;height:43.90px;background:#f0f3f7"></div>
<div class="b" style="left:840.30px;top:599.40px;width:1.00px;height:43.90px;background:#f0f3f7"></div>
<div class="b" style="left:978.30px;top:599.40px;width:1.00px;height:43.90px;background:#f0f3f7"></div>
<div class="b" style="left:1225.10px;top:599.40px;width:1.00px;height:43.90px;background:#f0f3f7"></div>
<div class="b" style="left:28.20px;top:613.35px;width:11.80px;height:11.80px;background:#fff;border:1px solid #7a7a7a;border-radius:2.5px;box-sizing:border-box"></div>
<div class="t" id="code4" style="top:617.39px;font:400 10px/10px 'Liberation Mono',monospace;color:#6f7f98;letter-spacing:-0.693px;left:57.88px;-webkit-text-stroke:0.2px #6f7f98;">1500</div>
<div class="t" id="name4" style="top:616.32px;font:400 10.9px/10.9px 'Liberation Sans',sans-serif;color:#334155;letter-spacing:-0.038px;left:128.71px;-webkit-text-stroke:0.15px #334155;">Equipment</div>
<div class="b" style="left:416.40px;top:615.15px;width:17.80px;height:14.70px;background:#dbe8fd;border-radius:3px"></div>
<div class="t" id="typ4" style="top:618.86px;font:700 9.2px/9.2px 'Liberation Sans',sans-serif;color:#2446c9;letter-spacing:0.000px;left:425.30px;transform:translateX(-50%);">A</div>
<div class="b" style="left:464.20px;top:605.95px;width:78.00px;height:30.90px;background:#fffbeb;border:1px solid #fde58f;border-radius:3px;box-sizing:border-box"></div>
<div class="b" style="left:471.00px;top:619.00px;width:5.00px;height:5.00px;background:#f98e0a;border-radius:50%"></div>
<div class="t" id="in4" style="top:610.82px;font:700 9.6px/9.6px 'Liberation Sans',sans-serif;color:#c2570c;letter-spacing:0.000px;left:501.20px;transform:translateX(-50%);">In</div>
<div class="t" id="prog4" style="top:622.82px;font:700 9.6px/9.6px 'Liberation Sans',sans-serif;color:#c2570c;letter-spacing:-0.648px;left:501.20px;transform:translateX(-50%);">progress</div>
<svg class="i" style="left:527.80px;top:617.55px;width:8.00px;height:8.00px;" viewBox="0 0 24 24" fill="none" stroke="#ecab5f" stroke-width="2.8" stroke-linecap="round" stroke-linejoin="round"><path d="m6 9 6 6 6-6"/></svg>
<div class="b" style="left:560.20px;top:609.45px;width:24.10px;height:24.10px;background:#f1f5f9;border:1px solid #e4e9f0;border-radius:3px;box-sizing:border-box"></div>
<div class="b" style="left:568.40px;top:621.15px;width:7.80px;height:1.80px;background:#6b7a90;border-radius:1px"></div>
<div class="b" style="left:702.00px;top:621.00px;width:6.00px;height:1.00px;background:#cfd8e3"></div>
<div class="b" style="left:825.00px;top:621.00px;width:6.00px;height:1.00px;background:#cfd8e3"></div>
<div class="b" style="left:892.00px;top:621.00px;width:7.00px;height:1.00px;background:#7f8ca3"></div>
<div class="b" style="left:963.00px;top:621.00px;width:7.00px;height:1.00px;background:#7f8ca3"></div>
<div class="b" style="left:1086.00px;top:621.00px;width:7.00px;height:1.00px;background:#7f8ca3"></div>
<div class="b" style="left:1209.00px;top:621.00px;width:7.00px;height:1.00px;background:#7f8ca3"></div>
<div class="b" style="left:1289.00px;top:621.00px;width:7.00px;height:1.00px;background:#7f8ca3"></div>
<div class="b" style="left:1375.00px;top:621.00px;width:7.00px;height:1.00px;background:#7f8ca3"></div>
<svg class="i" style="left:1402px;top:613.35px;width:8px;height:12px" viewBox="0 0 8 12"><path d="M2.2 2.2 6.3 6 2.2 9.8" fill="none" stroke="#8e9bb0" stroke-width="1.1" stroke-linecap="round" stroke-linejoin="round"/></svg>
<div class="b" style="left:18.50px;top:643.30px;width:1402.70px;height:44.70px;background:#fafbfc"></div>
<div class="b" style="left:18.50px;top:687.50px;width:1402.70px;height:1.00px;background:#f1f4f8"></div>
<div class="b" style="left:592.80px;top:643.30px;width:1.00px;height:44.70px;background:#f0f3f7"></div>
<div class="b" style="left:840.30px;top:643.30px;width:1.00px;height:44.70px;background:#f0f3f7"></div>
<div class="b" style="left:978.30px;top:643.30px;width:1.00px;height:44.70px;background:#f0f3f7"></div>
<div class="b" style="left:1225.10px;top:643.30px;width:1.00px;height:44.70px;background:#f0f3f7"></div>
<div class="b" style="left:28.20px;top:657.65px;width:11.80px;height:11.80px;background:#fff;border:1px solid #7a7a7a;border-radius:2.5px;box-sizing:border-box"></div>
<div class="t" id="code5" style="top:661.69px;font:400 10px/10px 'Liberation Mono',monospace;color:#6f7f98;letter-spacing:-0.693px;left:57.88px;-webkit-text-stroke:0.2px #6f7f98;">1510</div>
<div class="t" id="name5" style="top:660.62px;font:400 10.9px/10.9px 'Liberation Sans',sans-serif;color:#334155;letter-spacing:-0.095px;left:129.58px;-webkit-text-stroke:0.15px #334155;">Accumulated Depreciation</div>
<div class="b" style="left:416.40px;top:659.45px;width:17.80px;height:14.70px;background:#dbe8fd;border-radius:3px"></div>
<div class="t" id="typ5" style="top:663.16px;font:700 9.2px/9.2px 'Liberation Sans',sans-serif;color:#2446c9;letter-spacing:0.000px;left:425.30px;transform:translateX(-50%);">A</div>
<div class="b" style="left:464.20px;top:650.25px;width:78.00px;height:30.90px;background:#fffbeb;border:1px solid #fde58f;border-radius:3px;box-sizing:border-box"></div>
<div class="b" style="left:471.00px;top:664.00px;width:5.00px;height:5.00px;background:#f98e0a;border-radius:50%"></div>
<div class="t" id="in5" style="top:655.12px;font:700 9.6px/9.6px 'Liberation Sans',sans-serif;color:#c2570c;letter-spacing:0.000px;left:501.20px;transform:translateX(-50%);">In</div>
<div class="t" id="prog5" style="top:667.12px;font:700 9.6px/9.6px 'Liberation Sans',sans-serif;color:#c2570c;letter-spacing:-0.648px;left:501.20px;transform:translateX(-50%);">progress</div>
<svg class="i" style="left:527.80px;top:661.85px;width:8.00px;height:8.00px;" viewBox="0 0 24 24" fill="none" stroke="#ecab5f" stroke-width="2.8" stroke-linecap="round" stroke-linejoin="round"><path d="m6 9 6 6 6-6"/></svg>
<div class="b" style="left:560.20px;top:653.75px;width:24.10px;height:24.10px;background:#f1f5f9;border:1px solid #e4e9f0;border-radius:3px;box-sizing:border-box"></div>
<div class="b" style="left:568.40px;top:665.45px;width:7.80px;height:1.80px;background:#6b7a90;border-radius:1px"></div>
<div class="b" style="left:702.00px;top:666.00px;width:6.00px;height:1.00px;background:#cfd8e3"></div>
<div class="b" style="left:825.00px;top:666.00px;width:6.00px;height:1.00px;background:#cfd8e3"></div>
<div class="b" style="left:892.00px;top:666.00px;width:7.00px;height:1.00px;background:#7f8ca3"></div>
<div class="b" style="left:963.00px;top:666.00px;width:7.00px;height:1.00px;background:#7f8ca3"></div>
<div class="b" style="left:1086.00px;top:666.00px;width:7.00px;height:1.00px;background:#7f8ca3"></div>
<div class="b" style="left:1209.00px;top:666.00px;width:7.00px;height:1.00px;background:#7f8ca3"></div>
<div class="b" style="left:1289.00px;top:666.00px;width:7.00px;height:1.00px;background:#7f8ca3"></div>
<div class="b" style="left:1375.00px;top:666.00px;width:7.00px;height:1.00px;background:#7f8ca3"></div>
<svg class="i" style="left:1402px;top:657.65px;width:8px;height:12px" viewBox="0 0 8 12"><path d="M2.2 2.2 6.3 6 2.2 9.8" fill="none" stroke="#8e9bb0" stroke-width="1.1" stroke-linecap="round" stroke-linejoin="round"/></svg>
<div class="b" style="left:18.50px;top:688.00px;width:1402.70px;height:36.00px;background:#ffffff"></div>
<div class="b" style="left:18.50px;top:723.50px;width:1402.70px;height:1.00px;background:#f1f4f8"></div>
<div class="b" style="left:592.80px;top:688.00px;width:1.00px;height:36.00px;background:#f0f3f7"></div>
<div class="b" style="left:840.30px;top:688.00px;width:1.00px;height:36.00px;background:#f0f3f7"></div>
<div class="b" style="left:978.30px;top:688.00px;width:1.00px;height:36.00px;background:#f0f3f7"></div>
<div class="b" style="left:1225.10px;top:688.00px;width:1.00px;height:36.00px;background:#f0f3f7"></div>
<div class="b" style="left:28.20px;top:698.00px;width:11.80px;height:11.80px;background:#fff;border:1px solid #7a7a7a;border-radius:2.5px;box-sizing:border-box"></div>
<div class="t" id="code6" style="top:702.04px;font:400 10px/10px 'Liberation Mono',monospace;color:#6f7f98;letter-spacing:-0.699px;left:57.90px;-webkit-text-stroke:0.2px #6f7f98;">2100</div>
<div class="t" id="name6" style="top:700.97px;font:400 10.9px/10.9px 'Liberation Sans',sans-serif;color:#334155;letter-spacing:-0.195px;left:128.71px;-webkit-text-stroke:0.15px #334155;">Business Credit Card</div>
<div class="b" style="left:416.40px;top:699.80px;width:16.40px;height:14.70px;background:#fdf1c7;border-radius:3px"></div>
<div class="t" id="typ6" style="top:703.51px;font:700 9.2px/9.2px 'Liberation Sans',sans-serif;color:#b0560f;letter-spacing:0.000px;left:424.60px;transform:translateX(-50%);">L</div>
<div class="b" style="left:464.20px;top:696.50px;width:78.00px;height:19.30px;background:#ecfdf4;border:1px solid #b4efcd;border-radius:3px;box-sizing:border-box"></div>
<div class="b" style="left:471.00px;top:703.50px;width:5.00px;height:5.00px;background:#12b76a;border-radius:50%"></div>
<div class="t" id="comp6" style="top:701.57px;font:700 9.6px/9.6px 'Liberation Sans',sans-serif;color:#17784a;letter-spacing:-0.494px;left:478.31px;">Completed</div>
<svg class="i" style="left:527.20px;top:701.80px;width:8.00px;height:8.00px;" viewBox="0 0 24 24" fill="none" stroke="#7fcea3" stroke-width="2.8" stroke-linecap="round" stroke-linejoin="round"><path d="m6 9 6 6 6-6"/></svg>
<div class="b" style="left:560.20px;top:694.10px;width:24.10px;height:24.10px;background:#ecfdf4;border:1px solid #b4efcd;border-radius:3px;box-sizing:border-box"></div>
<div class="t" id="tick6" style="top:700.99px;font:700 11px/11px 'Liberation Sans',sans-serif;color:#166b45;letter-spacing:0.000px;left:572.25px;transform:translateX(-50%);">C</div>
<div class="b" style="left:702.00px;top:706.00px;width:6.00px;height:1.00px;background:#cfd8e3"></div>
<div class="t" id="v6_1" style="top:701.54px;font:400 11.3px/11.3px 'Liberation Mono',monospace;color:#1e293b;letter-spacing:-0.626px;right:608.53px;-webkit-text-stroke:0.25px #1e293b;">$79.00</div>
<div class="b" style="left:892.00px;top:706.00px;width:7.00px;height:1.00px;background:#7f8ca3"></div>
<div class="b" style="left:963.00px;top:706.00px;width:7.00px;height:1.00px;background:#7f8ca3"></div>
<div class="b" style="left:1086.00px;top:706.00px;width:7.00px;height:1.00px;background:#7f8ca3"></div>
<div class="t" id="v6_5" style="top:701.54px;font:400 11.3px/11.3px 'Liberation Mono',monospace;color:#94a3b8;letter-spacing:-0.626px;right:223.73px;-webkit-text-stroke:0.2px #94a3b8;">$79.00</div>
<div class="b" style="left:1289.00px;top:706.00px;width:7.00px;height:1.00px;background:#7f8ca3"></div>
<div class="t" id="v6_7" style="top:701.54px;font:400 11.3px/11.3px 'Liberation Mono',monospace;color:#56657c;letter-spacing:-0.849px;right:58.65px;-webkit-text-stroke:0.2px #56657c;">0.0%</div>
<svg class="i" style="left:1402px;top:698.00px;width:8px;height:12px" viewBox="0 0 8 12"><path d="M2.2 2.2 6.3 6 2.2 9.8" fill="none" stroke="#8e9bb0" stroke-width="1.1" stroke-linecap="round" stroke-linejoin="round"/></svg>
<div class="b" style="left:18.50px;top:724.00px;width:1402.70px;height:44.50px;background:#fafbfc"></div>
<div class="b" style="left:18.50px;top:768.00px;width:1402.70px;height:1.00px;background:#f1f4f8"></div>
<div class="b" style="left:592.80px;top:724.00px;width:1.00px;height:44.50px;background:#f0f3f7"></div>
<div class="b" style="left:840.30px;top:724.00px;width:1.00px;height:44.50px;background:#f0f3f7"></div>
<div class="b" style="left:978.30px;top:724.00px;width:1.00px;height:44.50px;background:#f0f3f7"></div>
<div class="b" style="left:1225.10px;top:724.00px;width:1.00px;height:44.50px;background:#f0f3f7"></div>
<div class="b" style="left:28.20px;top:738.25px;width:11.80px;height:11.80px;background:#fff;border:1px solid #7a7a7a;border-radius:2.5px;box-sizing:border-box"></div>
<div class="t" id="code7" style="top:742.29px;font:400 10px/10px 'Liberation Mono',monospace;color:#6f7f98;letter-spacing:-0.699px;left:57.90px;-webkit-text-stroke:0.2px #6f7f98;">2200</div>
<div class="t" id="name7" style="top:741.22px;font:400 10.9px/10.9px 'Liberation Sans',sans-serif;color:#334155;letter-spacing:-0.327px;left:129.11px;-webkit-text-stroke:0.15px #334155;">Sales Tax Payable</div>
<div class="b" style="left:416.40px;top:740.05px;width:16.40px;height:14.70px;background:#fdf1c7;border-radius:3px"></div>
<div class="t" id="typ7" style="top:743.76px;font:700 9.2px/9.2px 'Liberation Sans',sans-serif;color:#b0560f;letter-spacing:0.000px;left:424.60px;transform:translateX(-50%);">L</div>
<div class="b" style="left:464.20px;top:730.85px;width:78.00px;height:30.90px;background:#fffbeb;border:1px solid #fde58f;border-radius:3px;box-sizing:border-box"></div>
<div class="b" style="left:471.00px;top:744.00px;width:5.00px;height:5.00px;background:#f98e0a;border-radius:50%"></div>
<div class="t" id="in7" style="top:735.72px;font:700 9.6px/9.6px 'Liberation Sans',sans-serif;color:#c2570c;letter-spacing:0.000px;left:501.20px;transform:translateX(-50%);">In</div>
<div class="t" id="prog7" style="top:747.72px;font:700 9.6px/9.6px 'Liberation Sans',sans-serif;color:#c2570c;letter-spacing:-0.648px;left:501.20px;transform:translateX(-50%);">progress</div>
<svg class="i" style="left:527.80px;top:742.45px;width:8.00px;height:8.00px;" viewBox="0 0 24 24" fill="none" stroke="#ecab5f" stroke-width="2.8" stroke-linecap="round" stroke-linejoin="round"><path d="m6 9 6 6 6-6"/></svg>
<div class="b" style="left:560.20px;top:734.35px;width:24.10px;height:24.10px;background:#f1f5f9;border:1px solid #e4e9f0;border-radius:3px;box-sizing:border-box"></div>
<div class="b" style="left:568.40px;top:746.05px;width:7.80px;height:1.80px;background:#6b7a90;border-radius:1px"></div>
<div class="b" style="left:702.00px;top:746.00px;width:6.00px;height:1.00px;background:#cfd8e3"></div>
<div class="b" style="left:825.00px;top:746.00px;width:6.00px;height:1.00px;background:#cfd8e3"></div>
<div class="b" style="left:892.00px;top:746.00px;width:7.00px;height:1.00px;background:#7f8ca3"></div>
<div class="b" style="left:963.00px;top:746.00px;width:7.00px;height:1.00px;background:#7f8ca3"></div>
<div class="b" style="left:1086.00px;top:746.00px;width:7.00px;height:1.00px;background:#7f8ca3"></div>
<div class="b" style="left:1209.00px;top:746.00px;width:7.00px;height:1.00px;background:#7f8ca3"></div>
<div class="b" style="left:1289.00px;top:746.00px;width:7.00px;height:1.00px;background:#7f8ca3"></div>
<div class="b" style="left:1375.00px;top:746.00px;width:7.00px;height:1.00px;background:#7f8ca3"></div>
<svg class="i" style="left:1402px;top:738.25px;width:8px;height:12px" viewBox="0 0 8 12"><path d="M2.2 2.2 6.3 6 2.2 9.8" fill="none" stroke="#8e9bb0" stroke-width="1.1" stroke-linecap="round" stroke-linejoin="round"/></svg>
<div class="b" style="left:18.50px;top:768.50px;width:1402.70px;height:36.80px;background:#ffffff"></div>
<div class="b" style="left:18.50px;top:804.80px;width:1402.70px;height:1.00px;background:#f1f4f8"></div>
<div class="b" style="left:592.80px;top:768.50px;width:1.00px;height:36.80px;background:#f0f3f7"></div>
<div class="b" style="left:840.30px;top:768.50px;width:1.00px;height:36.80px;background:#f0f3f7"></div>
<div class="b" style="left:978.30px;top:768.50px;width:1.00px;height:36.80px;background:#f0f3f7"></div>
<div class="b" style="left:1225.10px;top:768.50px;width:1.00px;height:36.80px;background:#f0f3f7"></div>
<div class="b" style="left:28.20px;top:778.90px;width:11.80px;height:11.80px;background:#fff;border:1px solid #7a7a7a;border-radius:2.5px;box-sizing:border-box"></div>
<div class="t" id="code8" style="top:782.94px;font:400 10px/10px 'Liberation Mono',monospace;color:#6f7f98;letter-spacing:-0.725px;left:57.98px;-webkit-text-stroke:0.2px #6f7f98;">3000</div>
<div class="t" id="name8" style="top:781.87px;font:400 10.9px/10.9px 'Liberation Sans',sans-serif;color:#334155;letter-spacing:-0.136px;left:129.08px;-webkit-text-stroke:0.15px #334155;">Owner&#x27;s Equity</div>
<div class="b" style="left:416.40px;top:780.70px;width:17.00px;height:14.70px;background:#f1e6fd;border-radius:3px"></div>
<div class="t" id="typ8" style="top:784.41px;font:700 9.2px/9.2px 'Liberation Sans',sans-serif;color:#8a2fc8;letter-spacing:0.000px;left:424.90px;transform:translateX(-50%);">E</div>
<div class="b" style="left:464.20px;top:777.40px;width:78.00px;height:19.30px;background:#ecfdf4;border:1px solid #b4efcd;border-radius:3px;box-sizing:border-box"></div>
<div class="b" style="left:471.00px;top:784.50px;width:5.00px;height:5.00px;background:#12b76a;border-radius:50%"></div>
<div class="t" id="comp8" style="top:782.47px;font:700 9.6px/9.6px 'Liberation Sans',sans-serif;color:#17784a;letter-spacing:-0.494px;left:478.31px;">Completed</div>
<svg class="i" style="left:527.20px;top:782.70px;width:8.00px;height:8.00px;" viewBox="0 0 24 24" fill="none" stroke="#7fcea3" stroke-width="2.8" stroke-linecap="round" stroke-linejoin="round"><path d="m6 9 6 6 6-6"/></svg>
<div class="b" style="left:560.20px;top:775.00px;width:24.10px;height:24.10px;background:#ecfdf4;border:1px solid #b4efcd;border-radius:3px;box-sizing:border-box"></div>
<svg class="i" style="left:566.70px;top:780.50px;width:12.00px;height:12.00px;" viewBox="0 0 24 24" fill="none" stroke="#166b45" stroke-width="3" stroke-linecap="round" stroke-linejoin="round"><path d="M20 6 9 17l-5-5"/></svg>
<div class="b" style="left:702.00px;top:787.00px;width:6.00px;height:1.00px;background:#cfd8e3"></div>
<div class="t" id="v8_1" style="top:782.44px;font:400 11.3px/11.3px 'Liberation Mono',monospace;color:#1e293b;letter-spacing:-0.602px;right:608.51px;-webkit-text-stroke:0.25px #1e293b;">$500.00</div>
<div class="b" style="left:892.00px;top:787.00px;width:7.00px;height:1.00px;background:#7f8ca3"></div>
<div class="b" style="left:963.00px;top:787.00px;width:7.00px;height:1.00px;background:#7f8ca3"></div>
<div class="b" style="left:1086.00px;top:787.00px;width:7.00px;height:1.00px;background:#7f8ca3"></div>
<div class="t" id="v8_5" style="top:782.44px;font:400 11.3px/11.3px 'Liberation Mono',monospace;color:#94a3b8;letter-spacing:-0.602px;right:223.71px;-webkit-text-stroke:0.2px #94a3b8;">$500.00</div>
<div class="b" style="left:1289.00px;top:787.00px;width:7.00px;height:1.00px;background:#7f8ca3"></div>
<div class="t" id="v8_7" style="top:782.44px;font:400 11.3px/11.3px 'Liberation Mono',monospace;color:#56657c;letter-spacing:-0.849px;right:58.65px;-webkit-text-stroke:0.2px #56657c;">0.0%</div>
<svg class="i" style="left:1402px;top:778.90px;width:8px;height:12px" viewBox="0 0 8 12"><path d="M2.2 2.2 6.3 6 2.2 9.8" fill="none" stroke="#8e9bb0" stroke-width="1.1" stroke-linecap="round" stroke-linejoin="round"/></svg>
<div class="b" style="left:18.50px;top:805.30px;width:1402.70px;height:36.70px;background:#fafbfc"></div>
<div class="b" style="left:18.50px;top:841.50px;width:1402.70px;height:1.00px;background:#f1f4f8"></div>
<div class="b" style="left:592.80px;top:805.30px;width:1.00px;height:36.70px;background:#f0f3f7"></div>
<div class="b" style="left:840.30px;top:805.30px;width:1.00px;height:36.70px;background:#f0f3f7"></div>
<div class="b" style="left:978.30px;top:805.30px;width:1.00px;height:36.70px;background:#f0f3f7"></div>
<div class="b" style="left:1225.10px;top:805.30px;width:1.00px;height:36.70px;background:#f0f3f7"></div>
<div class="b" style="left:1424.00px;top:41.50px;width:16.00px;height:768.50px;background:linear-gradient(90deg,rgba(15,23,42,0),rgba(15,23,42,.05))"></div>
</body></html>
